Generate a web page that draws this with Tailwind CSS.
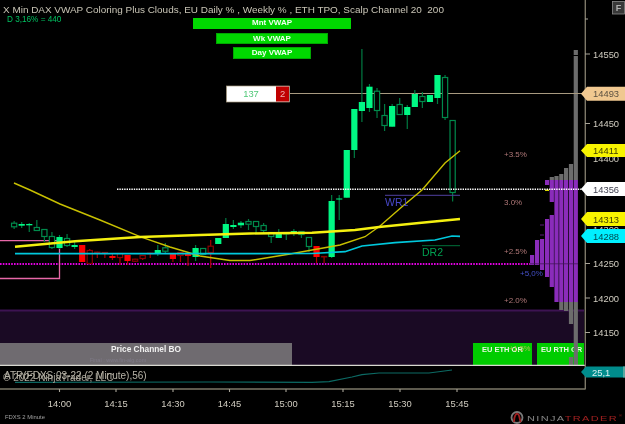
<!DOCTYPE html>
<html lang="en">
<head>
  <meta charset="UTF-8">
  <meta name="viewport" content="width=device-width, initial-scale=1.0">
  <title>X Min DAX chart</title>
  <script src="https://cdn.jsdelivr.net/npm/@tailwindcss/browser@4"></script>
</head>
<body class="bg-black">
  <div class="relative w-[625px] h-[424px] bg-black overflow-hidden font-['Liberation_Sans',Arial,sans-serif] blur-[0.35px]">

    <svg id="chart" class="absolute inset-0" width="625" height="424" viewBox="0 0 625 424">
      <!-- lower purple panel -->
      <rect x="0" y="310" width="584" height="55" fill="#1a0a24"/>
      <rect x="0" y="309.500" width="584" height="2" fill="#3d1352"/>
      <rect x="0" y="343" width="292" height="22" fill="#6f6b70"/>
      <rect x="473" y="343" width="59" height="22" fill="#00cc00"/>
      <rect x="537" y="343" width="47" height="22" fill="#00cc00"/>
      <text x="146" y="352" text-anchor="middle" fill="#f0f0f0" class="text-[8.3px] font-bold">Price Channel BO</text>
      <text x="118" y="362" text-anchor="middle" fill="#7f7a88" class="text-[5.5px]">Final : www.fin-alg.com</text>
      <text x="482" y="351.500" fill="#e8f8e0" class="text-[7.5px] font-bold">EU ETH OR</text>
      <text x="541" y="351.500" fill="#e8f8e0" class="text-[7.5px] font-bold">EU RTH OR</text>
      <text x="509" y="350.500" fill="#b0c050" class="text-[7.5px]">+1.5%</text>

      <g id="profile"></g>
      <rect x="530" y="263.500" width="48" height="0.7" fill="#3d1352"/>
      <rect x="545" y="189.500" width="4" height="1.500" fill="#d8d800"/>
      <rect x="540" y="224.500" width="4" height="1" fill="#5a1a78"/>
      <rect x="540" y="234.500" width="4" height="1" fill="#5a1a78"/>

      <!-- levels -->
      <line x1="290" y1="93.500" x2="585" y2="93.500" stroke="#a89a80" stroke-width="1.100"/>
      <line x1="0" y1="264" x2="530" y2="264" stroke="#e000e0" stroke-width="1.800" stroke-dasharray="1.600 1.200"/>
      <path d="M0 240.700H59.500V278.500H0" fill="none" stroke="#e868a8" stroke-width="1.300"/>

      <g id="candles"></g>

      <line x1="117" y1="189.300" x2="582" y2="189.300" stroke="#ffffff" stroke-width="1.400" stroke-dasharray="1.400 1"/>
      <line x1="385" y1="195.300" x2="460" y2="195.300" stroke="#5040a0" stroke-width="1"/>
      <line x1="422" y1="245.700" x2="460" y2="245.700" stroke="#00703a" stroke-width="1"/>

      <!-- moving averages -->
      <polyline fill="none" stroke="#c8c000" stroke-width="1.400" points="14,183 30,190 60,204 100,220 140,236.700 170,247 200,256 230,260.500 250,260.500 290,254 312,250 340,245 365,236.700 380,226 402,206.700 422,190 445,163 460,150.700"/>
      <polyline fill="none" stroke="#f4f010" stroke-width="2.400" points="15,246.700 75,241.300 140,237 200,235 250,233.500 312,232.700 355,230 379,227 419,223 460,219"/>
      <polyline fill="none" stroke="#00c8dc" stroke-width="1.700" points="15,253.700 312,253.500 345,251.700 362,246 395,242.700 435,240 452,236 460,236.300"/>

      <text x="385" y="206" fill="#4848c8" class="text-[10.5px]">WR1</text>
      <text x="422" y="256" fill="#00a050" class="text-[10.5px]">DR2</text>
      <text x="504" y="157" fill="#b07878" class="text-[8px]">+3.5%</text>
      <text x="504" y="205" fill="#b07878" class="text-[8px]">3.0%</text>
      <text x="504" y="253.500" fill="#b07878" class="text-[8px]">+2.5%</text>
      <text x="520" y="276" fill="#4450c8" class="text-[8px]">+5,0%</text>
      <text x="504" y="303" fill="#b07878" class="text-[8px]">+2.0%</text>

      <!-- axes -->
      <line x1="0" y1="365.300" x2="585" y2="365.300" stroke="#d8d8d0" stroke-width="1.200"/>
      <line x1="585.300" y1="0" x2="585.300" y2="389.500" stroke="#7d7868" stroke-width="1.400"/>
      <line x1="0" y1="389" x2="585" y2="389" stroke="#7d7868" stroke-width="1.400"/>
      <polyline fill="none" stroke="#0c6a64" stroke-width="1.200" points="15,382.300 210,382 312,382.300 329,381.700 352,377 362,374.700 379,373 429,373 452,370"/>

      <path d="M585 19h3M585 54h5M585 123.500h5M585 263.500h5M585 298h5M585 332.500h5M59.500 389v3M116 389v3M173 389v3M229.500 389v3M286 389v3M343 389v3M400 389v3M457 389v3" stroke="#a8a498" stroke-width="1.100" fill="none"/>

      <g fill="#d0ccc0" class="text-[9.4px]">
        <text x="593" y="57.500">14550</text>
        <text x="593" y="92.500">14500</text>
        <text x="593" y="127">14450</text>
        <text x="593" y="162">14400</text>
        <text x="593" y="232.500">14300</text>
        <text x="593" y="267">14250</text>
        <text x="593" y="301.500">14200</text>
        <text x="593" y="336">14150</text>
        <text x="59.500" y="406.500" text-anchor="middle">14:00</text>
        <text x="116" y="406.500" text-anchor="middle">14:15</text>
        <text x="173" y="406.500" text-anchor="middle">14:30</text>
        <text x="229.500" y="406.500" text-anchor="middle">14:45</text>
        <text x="286" y="406.500" text-anchor="middle">15:00</text>
        <text x="343" y="406.500" text-anchor="middle">15:15</text>
        <text x="400" y="406.500" text-anchor="middle">15:30</text>
        <text x="457" y="406.500" text-anchor="middle">15:45</text>
      </g>

      <!-- price tags -->
      <path d="M581 93.700L587 86.800H625V100.700H587Z" fill="#f0c890"/>
      <text x="593" y="97.200" fill="#5a5040" class="text-[9.4px]">14493</text>
      <path d="M581 150.500L587 144H625V157H587Z" fill="#f8f400"/>
      <text x="593" y="154" fill="#404000" class="text-[9.4px]">14411</text>
      <path d="M581 189L587 182H625V196H587Z" fill="#ffffff"/>
      <text x="593" y="192.500" fill="#404050" class="text-[9.4px]">14356</text>
      <path d="M581 219L587 212H625V226H587Z" fill="#f8f400"/>
      <text x="593" y="222.500" fill="#404000" class="text-[9.4px]">14313</text>
      <path d="M581 236L587 229H625V243H587Z" fill="#00f0ff"/>
      <text x="593" y="239.500" fill="#004850" class="text-[9.4px]">14288</text>
      <path d="M581 372L586 366.500H625V377.500H586Z" fill="#008c8c"/>
      <rect x="623" y="366.500" width="2" height="11" fill="#5aa8a0"/>
      <text x="592" y="375.500" fill="#d8f0f0" class="text-[9.4px]">25,1</text>

      <!-- trade box -->
      <rect x="226.500" y="86" width="63" height="16" fill="#ffffff" stroke="#a89a80" stroke-width="0.700"/>
      <rect x="276" y="86.500" width="13" height="15" fill="#c00000"/>
      <text x="251" y="97.300" text-anchor="middle" fill="#50c878" class="text-[9.4px]">137</text>
      <text x="282.500" y="97.300" text-anchor="middle" fill="#f0b0b0" class="text-[9.4px]">2</text>

      <!-- F button -->
      <rect x="612.500" y="1.500" width="12" height="12.500" fill="#383838" stroke="#8a8a8a" stroke-width="0.800"/>
      <text x="618.500" y="11" text-anchor="middle" fill="#b0b0b0" class="text-[9px] font-bold">F</text>

      <!-- logo -->
      <circle cx="517" cy="417.500" r="5.500" fill="none" stroke="#7a7a7a" stroke-width="1.800"/>
      <path d="M514 422C514 416 516 413 518 414C520 415 519 420 521 422" fill="none" stroke="#a02020" stroke-width="1.800"/>
      <text x="527" y="421" fill="#868686" textLength="91" lengthAdjust="spacingAndGlyphs" class="text-[8px] tracking-[1px]">NINJA<tspan fill="#a02020">TRADER</tspan></text>
      <text x="619" y="417" fill="#a02020" class="text-[4px]">®</text>
    </svg>

    <!-- chart title -->
    <div class="absolute left-[3px] top-[4px] flex flex-col items-start">
      <div class="text-[9.950px] leading-[12px] text-[#c9c5b6] whitespace-pre">X Min DAX VWAP Coloring Plus Clouds, EU Daily % , Weekly % , ETH TPO, Scalp Channel 20  200</div>
      <div class="ml-[4px] -mt-[1px] text-[8.200px] leading-[9px] text-[#00c060]">D 3,16% = 440</div>
    </div>

    <!-- VWAP banners -->
    <div class="absolute left-[193px] top-[18px] w-[158px] flex flex-col items-center gap-[3.500px] text-[8px] font-bold text-[#f0fff0]">
      <div class="w-[158px] h-[11px] leading-[10px] text-center bg-[#00d800]">Mnt VWAP</div>
      <div class="w-[112px] h-[11px] leading-[10px] text-center bg-[#00d800] border border-[#00a800]">Wk VWAP</div>
      <div class="w-[78px] h-[12px] leading-[10px] text-center bg-[#00d800] border border-[#00a800]">Day VWAP</div>
    </div>

    <!-- overlapping footers -->
    <div class="absolute left-[3px] top-[372.500px] text-[10px] leading-[10px] text-[#a8a498] whitespace-nowrap">© 2022 NinjaTrader, LLC</div>
    <div class="absolute left-[4px] top-[371px] text-[10px] leading-[10px] text-[#b8b4a8] whitespace-nowrap">ATR(FDXS 03-22 (2 Minute),56)</div>
    <div class="absolute left-[5px] top-[414px] text-[5.900px] leading-[7px] text-[#a0a0a0] whitespace-nowrap">FDXS 2 Minute</div>
  </div>

  <script>
    const NS = 'http://www.w3.org/2000/svg';

    function rect(parent, x, y, w, h, attrs) {
      const el = document.createElementNS(NS, 'rect');
      el.setAttribute('x', x);
      el.setAttribute('y', y);
      el.setAttribute('width', w);
      el.setAttribute('height', h);
      for (const k in attrs) el.setAttribute(k, attrs[k]);
      parent.appendChild(el);
    }

    // k (bars from 14:00), type, body top, body bottom, wick top, wick bottom
    // G solid green, g hollow green, R solid red, r hollow red
    const candles = [
      [-6,'g',222.7,227.3,221,229], [-5,'G',224,225.7,222,228], [-4,'G',224,225.3,223,232],
      [-3,'g',227,231,220,231], [-2,'g',229,237,229,242], [-1,'g',236,248,232,249],
      [0,'G',237,248,235,249], [1,'g',238,246,234,247], [2,'G',245,247,242,249],
      [3,'R',245,262,245,262], [4,'r',250,264,249,264], [5,'r',251.7,252.3,251.7,258],
      [6,'r',252,252.3,252,258], [7,'R',256,258,253,260], [8,'r',253,258,253,265],
      [9,'R',255,261,255,265], [10,'r',258.7,261.7,258.7,262], [11,'r',255,259,255,260],
      [12,'r',252.7,253,252.7,258], [13,'G',250,254,245,256], [14,'g',247.3,251.7,243,253],
      [15,'R',253,259,253,262], [16,'r',252,256,252,262], [17,'R',254,256,253,266],
      [18,'G',248,257,245,261], [19,'g',248,255,248,255], [20,'r',245.7,253,240,268],
      [21,'G',238,244,238,244], [22,'G',224,238,218,238], [23,'G',225,227,220,229],
      [24,'G',222.7,225.3,221,228], [25,'g',221,224.7,219,230], [26,'g',221,227,221,233],
      [27,'g',225,231,223,233], [28,'g',232,237,232,243], [29,'G',233,238,229,238],
      [30,'g',233,234,233,240], [31,'G',231,233,229,236], [32,'g',231,235,231,238],
      [33,'g',237,247,237,252], [34,'R',246,257,246,263], [35,'r',256,256.3,256,263],
      [36,'G',201,257,195,258], [37,'G',198.5,199.5,195,220], [38,'G',150,197.7,150,197.7],
      [39,'G',109,150,109,158], [40,'G',102,111,49,122], [41,'G',86.7,108,84,112],
      [42,'g',90.7,111,88,118], [43,'g',115,126,104,131], [44,'G',106,126.7,104,126.7],
      [45,'g',104,115,98,115], [46,'G',107,115,105,129], [47,'G',94,107,90,107],
      [48,'g',96,102,92,108], [49,'G',95,102,95,102], [50,'G',75,98,75,104],
      [51,'g',77,118,75,120], [52,'g',120,193,120,201.5]
    ];

    const colors = {
      G: { body: '#00f884', wick: '#007a42' },
      g: { body: 'none', line: '#008a4c', wick: '#007a42' },
      R: { body: '#ff0000', wick: '#a80000' },
      r: { body: 'none', line: '#8c0000', wick: '#a80000' }
    };

    const candleGroup = document.getElementById('candles');
    candles.forEach(([k, type, top, bottom, wickTop, wickBottom]) => {
      const cx = 59.5 + 7.56 * k;
      const c = colors[type];
      rect(candleGroup, cx - 0.6, wickTop, 1.2, wickBottom - wickTop, { fill: c.wick });
      if (c.line) {
        rect(candleGroup, cx - 2.6, top + 0.5, 5.2, Math.max(bottom - top - 1, 0.4), { fill: '#000000', stroke: c.line, 'stroke-width': 1.2 });
      } else {
        rect(candleGroup, cx - 3.1, top, 6.2, bottom - top, { fill: c.body });
      }
    });

    // volume profile: column x, then [top, bottom, colour] pieces
    const purple = '#8a2cba';
    const gray = '#6c6c6c';
    const profile = [
      [530, [[255, 265, purple]]],
      [535, [[240, 265, purple]]],
      [540, [[239, 270, purple]]],
      [545, [[180, 185, purple], [219, 277, purple]]],
      [549.7, [[177, 180, gray], [180, 202, purple], [215, 287, purple]]],
      [554.4, [[176, 180, gray], [180, 302, purple]]],
      [559.2, [[174, 180, gray], [180, 302, purple], [302, 310, gray]]],
      [564, [[168, 180, gray], [180, 302, purple], [302, 311, gray]]],
      [568.9, [[164, 180, gray], [180, 302, purple], [302, 324, gray], [357, 365, gray]]],
      [573.7, [[50, 55, gray], [56, 180, gray], [180, 302, purple], [302, 365, gray]]]
    ];

    const profileGroup = document.getElementById('profile');
    profile.forEach(([x, pieces]) => {
      pieces.forEach(([top, bottom, fill]) => {
        rect(profileGroup, x, top, 4.2, bottom - top, { fill });
      });
    });
  </script>
</body>
</html>
